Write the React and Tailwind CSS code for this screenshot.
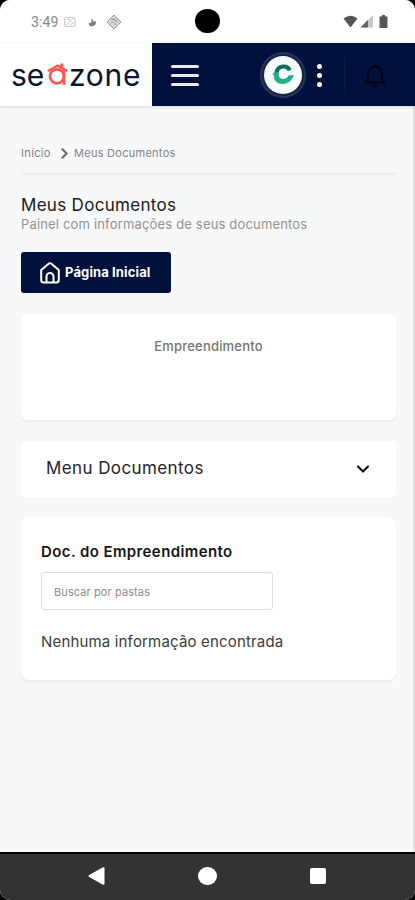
import React, { useState } from 'react';
import { ChevronDown, ChevronRight } from 'lucide-react';

const StatusBar = () => (
    <div className="relative flex h-[43px] shrink-0 items-center bg-white pl-[31px] pr-[27px]">
        <span className="w-[28px] whitespace-nowrap font-['Roboto',sans-serif] text-[14px] leading-none tracking-[0.1px] text-[#858585]">3:49</span>
        <svg className="ml-[5px]" width="12" height="12" viewBox="0 0 12 12" fill="none" stroke="#c4c4c4">
            <rect x="0.7" y="1.5" width="10.4" height="9" rx="1.5" />
            <path d="M2 9.5 9.5 2M3 3.5h3M7 9l2.5-3" />
        </svg>
        <svg className="ml-[11px]" width="10" height="10" viewBox="0 0 10 10">
            <path d="M4.500 1 6 3v1.600L8.800 4.200A3.800 3.800 0 0 1 1.400 6.500l3.100-.9z" fill="#7c7c7c" />
        </svg>
        <svg className="ml-[9px]" width="16" height="16" viewBox="0 0 16 16" fill="none" stroke="#9a9a9a">
            <path d="M8 1 15 8 8 15 1 8z" fill="#d9d9d9" strokeLinejoin="round" />
            <path d="M5 5.500h4.500l1.500 1.500M5 8.500h2.500l2.500 2.500M7 4l4 4.500" />
        </svg>
        <div className="absolute left-[195px] top-[9px] h-[24px] w-[25px] rounded-full bg-black" />
        <div className="ml-auto flex items-center">
            <svg width="15" height="13" viewBox="0 0 15 13">
                <path d="M0.5 3.6Q7.5-2 14.5 3.6L7.5 12.4z" fill="#555" />
            </svg>
            <svg className="ml-[2px]" width="13" height="13" viewBox="0 0 13 13">
                <path d="M13 0v12.5H.5z" fill="#c9c9c9" />
                <path d="M8 4.8v7.7H.5z" fill="#666" />
            </svg>
            <svg className="ml-[6px]" width="9" height="13" viewBox="0 0 9 13">
                <path d="M3 0h3v1.5h2.5V13H.5V1.5H3z" fill="#555" />
            </svg>
        </div>
    </div>
);

const Logo = () => (
    <div className="flex h-full w-[152px] shrink-0 items-center bg-white pl-[11px] font-['Inter',sans-serif] text-[30px] font-normal leading-none text-[#0b132e]">
        <span className="w-[36px] whitespace-nowrap tracking-[-0.2px]">se</span>
        <svg className="mt-[-1px] shrink-0" width="22" height="24" viewBox="0 0 22 24" fill="none" stroke="#fb5a53">
            <path d="M0.800 9 10.500 3.600 20.500 9" strokeWidth="2.500" />
            <path d="M14.800 6V1.500" strokeWidth="3" />
            <circle cx="10" cy="14.300" r="7" strokeWidth="2.800" />
            <path d="M17 7.500v15.300" strokeWidth="2.800" />
        </svg>
        <span className="whitespace-nowrap tracking-[0.7px]">zone</span>
    </div>
);

const Header = () => (
    <header className="z-10 flex h-[63px] shrink-0 items-center bg-[#00113b] shadow-[0_1px_3px_rgba(0,0,0,0.15)]">
        <Logo />
        <button className="ml-[19px] mt-px flex w-[28px] flex-col gap-[6px]">
            <span className="h-[3px] w-full rounded-full bg-[#ececec]" />
            <span className="h-[3px] w-full rounded-full bg-[#ececec]" />
            <span className="h-[3px] w-full rounded-full bg-[#ececec]" />
        </button>
        <div className="ml-[61px] flex h-[46px] w-[46px] shrink-0 items-center justify-center rounded-full border-2 border-[#26345c] bg-[#152349]">
            <div className="flex h-[38px] w-[38px] items-center justify-center rounded-full bg-[#f5fcfb]">
                <svg width="22" height="21" viewBox="0 0 22 21" fill="none">
                    <path d="M4.500 11.500C3.500 6 7 2.500 11.500 2.500c3 0 5.300 1.500 6 4" stroke="#176b5d" strokeWidth="4" />
                    <path d="M0.500 9.500 6.500 8c-.5 4.500 1.500 7 5 7 2.200 0 4-1.500 5-3.500l5.500-.5C20 16.500 16 20 10.800 20 5.500 20 1.500 16.500 2 12z" fill="#1fb182" />
                </svg>
            </div>
        </div>
        <div className="ml-[11px] mt-px flex w-[6px] flex-col gap-[4px]">
            <span className="h-[5px] w-[5px] rounded-full bg-white" />
            <span className="h-[5px] w-[5px] rounded-full bg-white" />
            <span className="h-[5px] w-[5px] rounded-full bg-white" />
        </div>
        <div className="ml-[21px] h-[36px] w-px bg-[#0d1d46]" />
        <svg className="ml-[19px] mt-[2px]" width="22" height="24" viewBox="0 0 22 24" fill="none" stroke="#01040f" strokeWidth="2">
            <path d="M1.500 18.500h19l-2.500-4V9.500a7 7 0 0 0-14 0v5zM11 2.500V.5" strokeLinejoin="round" />
            <path d="M9 22h4" strokeWidth="2.500" />
        </svg>
    </header>
);

const HomeIcon = () => (
    <svg width="20" height="22" viewBox="0 0 20 22" fill="none" stroke="#fff" strokeWidth="2" strokeLinejoin="round">
        <path d="M1.200 8 8.600 1.800q1.400-1 2.800 0L18.800 8v10a2.500 2.500 0 0 1-2.500 2.500H3.700A2.500 2.500 0 0 1 1.200 18z" />
        <path d="M6.500 20v-5.500a3.500 3.500 0 0 1 7 0V20" />
    </svg>
);

const BottomNav = () => (
    <nav className="flex h-[48px] shrink-0 items-center border-t-2 border-black bg-[#333] pl-[88px]">
        <svg className="mt-[-2px]" width="17" height="20" viewBox="0 0 17 20" fill="#fff">
            <path d="M1.200 9 15 1.300q1.500-.5 1.500 1v15.400q0 1.500-1.500 1L1.200 11q-1.400-1 0-2z" />
        </svg>
        <div className="ml-[93px] mt-[-2px] h-[18px] w-[19px] rounded-full bg-white" />
        <div className="ml-[93px] mt-[-2px] h-[16px] w-[16px] rounded-[2px] bg-white" />
    </nav>
);

const App = () => {
    const [search, setSearch] = useState('');

    return (
        <div className="bg-black">
            <div className="flex h-[900px] w-[415px] flex-col overflow-hidden rounded-[10px] bg-[#f7f8fa] font-['Inter',sans-serif]">
                <StatusBar />
                <Header />

                <main className="flex-1 border-r-2 border-[#e0e1e3] pl-[21px] pr-[17px]">
                    <div className="flex h-[69px] items-end border-b-2 border-[#eeeff1] pb-[10px] text-[11px] leading-[20px] text-[#838383]">
                        <span className="w-[35px] tracking-[0.35px]">Início</span>
                        <ChevronRight className="mb-[1px] h-[17px] w-[17px] text-[#6f6f6f]" strokeWidth={3} />
                        <span className="ml-px whitespace-nowrap tracking-[0.27px]">Meus Documentos</span>
                    </div>

                    <h1 className="mt-[20px] whitespace-nowrap text-[17px] leading-[20px] tracking-[0.3px] text-[#1b1b1b]">Meus Documentos</h1>
                    <p className="whitespace-nowrap text-[13px] leading-[18px] tracking-[0.17px] text-[#929292]">Painel com informações de seus documentos</p>

                    <button className="mt-[19px] flex h-[41px] w-[150px] items-center rounded-[3px] bg-[#00113b] pl-[19px] text-white">
                        <HomeIcon />
                        <span className="ml-[5px] whitespace-nowrap text-[13px] font-bold tracking-[0.12px]">Página Inicial</span>
                    </button>

                    <section className="mt-[21px] h-[106px] rounded-[7px] bg-white pt-[23px] text-center shadow-[0_2px_3px_rgba(0,0,0,0.05)]">
                        <h2 className="text-[13px] font-medium leading-[18px] tracking-[0.2px] text-[#747474]">Empreendimento</h2>
                    </section>

                    <section className="mt-[21px] flex h-[56px] items-center justify-between rounded-[5px] bg-white pl-[25px] pr-[23px]">
                        <h2 className="whitespace-nowrap text-[17px] tracking-[0.4px] text-[#22242d]">Menu Documentos</h2>
                        <ChevronDown className="h-[20px] w-[20px] text-[#151515]" strokeWidth={2.6} />
                    </section>

                    <section className="mt-[20px] h-[163px] rounded-[8px] bg-white px-[20px] pt-[24px] shadow-[0_2px_3px_rgba(0,0,0,0.05)]">
                        <h2 className="whitespace-nowrap text-[15px] font-semibold leading-[22px] tracking-[0.4px] text-[#161616]">Doc. do Empreendimento</h2>
                        <input
                            type="text"
                            value={search}
                            onChange={(e) => setSearch(e.target.value)}
                            placeholder="Buscar por pastas"
                            className="mt-[9px] block h-[38px] w-[232px] rounded-[3px] border border-[#dcdddf] bg-white px-[12px] pt-[2px] text-[11px] tracking-[0.1px] text-[#333] outline-none placeholder:text-[#8c8c8c]"
                        />
                        <p className="mt-[22px] whitespace-nowrap text-[15px] leading-[20px] tracking-[0.17px] text-[#3b3b3b]">Nenhuma informação encontrada</p>
                    </section>
                </main>

                <BottomNav />
            </div>
        </div>
    );
};

export default App;
